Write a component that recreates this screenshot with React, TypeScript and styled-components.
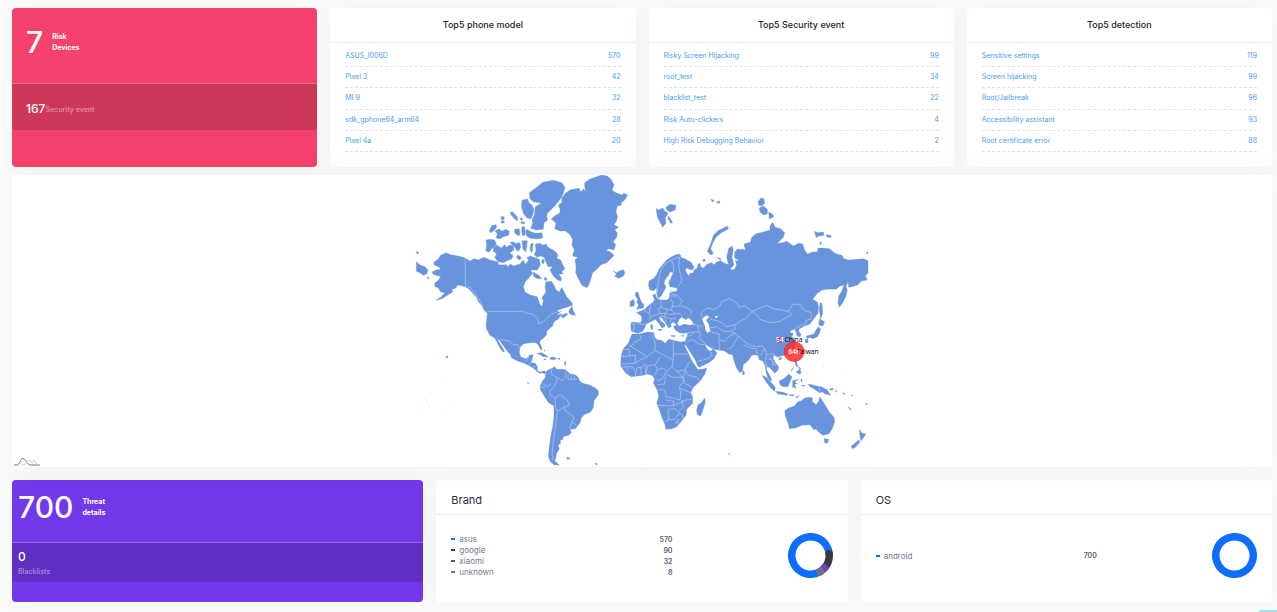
import React from "react";
import styled, { createGlobalStyle } from "styled-components";

const GlobalStyle = createGlobalStyle`
  * { box-sizing: border-box; }
  body {
    margin: 0;
    background: #fbfcfc;
    font-family: Inter, "Liberation Sans", sans-serif;
    color: #212529;
  }
  h2, ul, p { margin: 0; padding: 0; }
  ul { list-style: none; }
`;

const Page = styled.main`
  padding: 8px 5px 10px 12px;
  display: flex;
  flex-direction: column;
`;

const Row = styled.section<{ $columns: number }>`
  display: grid;
  grid-template-columns: repeat(${(p) => p.$columns}, minmax(0, 1fr));
  gap: 13px;
`;

const Card = styled.article<{ $height: number }>`
  display: flex;
  flex-direction: column;
  min-height: ${(p) => p.$height}px;
  border-radius: 4px;
  background: #fff;
  box-shadow: 0 0 28px rgba(70, 80, 120, 0.05);
`;

const StatCard = styled(Card)<{ $color: string }>`
  background: ${(p) => p.$color};
  color: #fff;
`;

const StatHead = styled.div<{ $height: number; $indent: number }>`
  display: flex;
  align-items: center;
  gap: 9px;
  height: ${(p) => p.$height}px;
  padding: 0 ${(p) => p.$indent}px 8px;
`;

const BigNumber = styled.strong`
  font-size: 30px;
  line-height: 36px;
  font-weight: 500;
`;

const StatLabel = styled.span`
  width: 40px;
  font-size: 7px;
  line-height: 11px;
  font-weight: 700;
`;

const StatStrip = styled.div<{ $height: number; $indent: number; $stacked?: boolean }>`
  display: flex;
  flex-direction: ${(p) => (p.$stacked ? "column" : "row")};
  align-items: ${(p) => (p.$stacked ? "flex-start" : "center")};
  justify-content: ${(p) => (p.$stacked ? "center" : "flex-start")};
  height: ${(p) => p.$height}px;
  padding: ${(p) => (p.$stacked ? 0 : 3)}px ${(p) => p.$indent}px 0;
  border-top: 1px solid rgba(255, 255, 255, 0.3);
  border-radius: 0 0 4px 4px;
  background: rgba(0, 0, 0, 0.16);
`;

const StripNumber = styled.strong`
  font-size: 12px;
  line-height: 16px;
  font-weight: 500;
`;

const StripLabel = styled.span`
  padding-top: 2px;
  font-size: 7px;
  line-height: 10px;
  font-weight: 600;
  color: rgba(255, 255, 255, 0.4);
`;

const TopTitle = styled.h2`
  height: 35px;
  border-bottom: 1px solid #eceff1;
  font-size: 9px;
  line-height: 33px;
  font-weight: 500;
  text-align: center;
`;

const TopList = styled.ul`
  flex: 1;
  display: grid;
  grid-template-rows: repeat(5, 1fr);
  padding: 3px 15px 15px;
`;

const TopItem = styled.li`
  display: flex;
  border-bottom: 1px dashed #dfe1ed;
`;

const TopLink = styled.a`
  flex: 1;
  display: flex;
  justify-content: space-between;
  align-items: center;
  font-size: 7px;
  line-height: 12px;
  color: #4c9cf0;
  text-decoration: none;
`;

const MapCard = styled.section`
  position: relative;
  margin: 8px 0 13px;
  background: #fff;
  box-shadow: 0 0 28px rgba(70, 80, 120, 0.05);
`;

const WorldMap = styled.svg`
  display: block;
  width: 100%;
  height: 292px;
`;

const MapCredit = styled.a`
  position: absolute;
  left: 2px;
  bottom: 1px;
  line-height: 0;
`;

const PanelTitle = styled.h2`
  height: 35px;
  padding: 4px 15px 0;
  border-bottom: 1px solid #ebedf2;
  font-size: 11px;
  line-height: 32px;
  font-weight: 400;
  color: #2b2b45;
`;

const PanelBody = styled.div`
  flex: 1;
  display: flex;
  align-items: center;
  justify-content: space-between;
  padding: 0 15px 6px;
`;

const Legend = styled.ul`
  width: 58%;
`;

const LegendItem = styled.li`
  display: flex;
  align-items: center;
  height: 11px;
  font-size: 8px;
  color: #74788d;
`;

const Dash = styled.i<{ $color: string }>`
  width: 4px;
  height: 2px;
  margin-right: 4px;
  background: ${(p) => p.$color};
`;

const LegendValue = styled.b`
  margin-left: auto;
  font-size: 7px;
  font-weight: 600;
  color: #595d75;
`;

const CornerButton = styled.button`
  position: fixed;
  right: 0;
  bottom: 0;
  width: 18px;
  height: 2px;
  padding: 0;
  border: 0;
  border-radius: 2px 0 0 0;
  background: #a9def5;
`;

type Entry = [string, number];

const topLists: { title: string; items: Entry[] }[] = [
  {
    title: "Top5 phone model",
    items: [["ASUS_I006D", 570], ["Pixel 3", 42], ["MI 9", 32], ["sdk_gphone64_arm64", 28], ["Pixel 4a", 20]],
  },
  {
    title: "Top5 Security event",
    items: [["Risky Screen Hijacking", 99], ["root_test", 34], ["blacklist_test", 22], ["Risk Auto-clickers", 4], ["High Risk Debugging Behavior", 2]],
  },
  {
    title: "Top5 detection",
    items: [["Sensitive settings", 119], ["Screen hijacking", 99], ["Root/Jailbreak", 96], ["Accessibility assistant", 93], ["Root certificate error", 88]],
  },
];

const palette = ["#0d6efd", "#343a40", "#6f42c1", "#6c757d"];

const shares: { title: string; items: Entry[] }[] = [
  { title: "Brand", items: [["asus", 570], ["google", 90], ["xiaomi", 32], ["unknown", 8]] },
  { title: "OS", items: [["android", 700]] },
];

const land = [
  // Greenland, Iceland
  "M524 38L540 27 560 20 575 15 592 18 603 28 612 44 606 60 618 68 637 75 641 70 653 75 646 88 633 100 634 106 622 108 618 125 623 140 618 155 612 165 626 171 614 180 622 188 620 202 610 215 617 224 612 240 596 236 589 242 600 245 612 255 607 262 590 278 573 284 562 296 548 308 543 325 536 345 531 353 517 347 507 330 497 308 498 288 495 270 503 262 488 258 490 248 493 240 486 225 488 208 478 192 466 183 450 183 434 176 438 160 424 147 434 138 450 128 450 116 445 106 456 97 455 85 466 70 480 60 497 56 507 55 513 66 521 56 528 66 524 50Z",
  "M610 303L620 308 632 301 641 300 645 310 638 320 625 325 614 318 620 313Z",
  // Canadian archipelago
  "M358 68L385 48 398 37 430 31 455 38 465 52 461 66 455 82 444 96 434 108 420 122 412 130 410 140 413 150 402 158 400 178 380 180 362 175 368 160 366 148 373 135 376 110 394 100 370 95 360 86Z",
  "M337 90L352 87 358 100 366 105 372 118 368 135 362 147 350 143 340 130 334 108Z",
  "M350 178L364 186 378 190 396 188 398 204 380 207 360 205 350 198 347 185Z",
  "M300 127l8-1 14 14 1 12-8-4-12-14ZM272 140l10 0 1 8-8 3ZM274 153l8 0 2 5-10 2ZM238 182L246 166 258 164 260 172 250 184 240 188Z",
  "M255 182L268 176 274 184 288 178 298 184 296 196 280 200 270 207 258 203 262 192ZM314 178l14-2 2 20-8 0-8-8ZM336 170l8 0 2 24-8 4-3-14ZM332 155l10 0 3 6-10 0ZM330 144l6 0 2 6-6 0Z",
  "M228 210L240 208 254 210 260 224 250 232 244 238 236 247 227 242 230 226Z",
  "M250 232L262 226 274 234 284 224 290 232 300 224 310 228 312 240 300 248 309 258 304 268 290 272 282 278 264 275 254 262 260 252 250 244Z",
  "M300 217l12-1 8 10-2 10ZM318 220l12-2 2 14-6 12-8-4ZM336 212l16 0-2 20-3 14-8-8ZM322 256l8 2 4 8-6 4-8-6ZM362 222l8-2-4 28-6-8ZM370 306l14 8 12 12-14 0-12-8ZM404 322l8 4-4 6-6-4ZM398 266l6 6-4 10-6-6Z",
  "M376 222L390 220 398 226 408 222 414 232 436 244 444 256 440 264 452 270 460 288 465 296 456 304 458 312 446 312 455 325 452 334 440 328 430 318 420 300 428 290 414 290 402 262 392 258 380 262 372 252 378 244Z",
  // North and Central America
  "M72 276L84 268 92 256 108 248 122 254 140 257 160 262 180 273 192 266 205 270 222 262 240 270 262 275 268 285 290 284 292 291 302 282 310 288 330 282 340 270 346 284 356 270 350 264 360 258 372 262 388 268 391 285 382 300 370 300 362 300 368 310 358 322 346 335 340 350 345 366 362 376 382 380 388 400 396 410 400 392 395 384 408 366 405 350 408 335 424 334 432 345 438 360 448 366 455 352 464 368 470 380 486 398 487 406 470 412 456 416 440 422 448 426 460 420 454 434 444 448 436 452 430 460 428 468 420 475 410 484 410 494 400 505 390 512 389 520 395 532 396 540 390 537 386 526 378 518 360 518 340 522 330 532 328 548 332 560 345 566 356 562 357 556 370 554 366 568 363 578 376 580 382 590 382 602 392 606 402 602 408 606 405 612 396 608 390 610 380 604 370 594 355 586 340 578 325 574 305 564 300 552 292 544 278 524 266 508 264 512 276 530 284 546 279 546 270 534 262 518 254 504 240 496 230 478 228 466 230 450 232 430 220 418 218 410 206 396 198 380 185 366 176 356 164 350 150 346 142 346 138 354 126 358 128 366 112 376 96 386 78 391 92 382 104 370 90 364 86 354 75 350 74 340 86 330 92 320 70 313 66 306 78 300 92 298 88 292 72 284Z",
  "M19 275L30 285 44 290 54 300 50 312 40 316 30 308 19 304ZM19 244l8 4-6 4ZM52 320l6 4-4 4ZM476 424L486 408 490 424 497 436 484 434 478 430ZM452 438L468 430 474 432 460 444Z",
  // Caribbean
  "M380 550L395 548 408 556 414 561 400 560 388 553ZM420 563l10-2 10 5-8 3-12-1ZM444 565l6 0 0 3-6 0ZM402 566l7 2-6 2ZM402 540l3 1-1 3ZM464 574l3 0 0 12-3 0Z",
  // South America
  "M408 606L414 600 428 594 434 590 440 598 456 598 468 600 480 612 496 614 504 622 510 634 518 640 536 644 558 655 566 664 564 676 552 692 550 712 542 726 522 734 514 744 510 758 496 776 480 778 484 788 476 796 460 800 458 808 450 812 452 820 444 826 448 836 440 850 438 862 434 872 448 886 432 884 420 874 415 858 418 830 422 800 428 770 432 740 432 708 416 698 404 680 392 660 390 648 398 632 405 624Z",
  "M470 862l10 2-3 4-6-1ZM556 880l6 1-1 4-4-2Z",
  // Eurasia
  "M715 345L718 332 732 325 740 314 748 296 758 284 770 270 782 262 794 256 805 252 812 256 812 262 824 266 842 276 852 290 848 300 838 298 830 294 826 298 828 306 836 318 840 310 850 308 852 300 862 294 864 282 870 280 872 290 880 294 892 282 905 278 912 284 920 276 932 272 944 280 956 284 960 296 956 284 950 262 956 235 966 228 970 240 966 262 972 284 962 296 964 300 974 298 980 284 976 272 988 272 974 264 974 246 982 238 996 238 1006 240 1002 222 1022 216 1024 204 1036 192 1060 186 1080 180 1080 168 1088 157 1096 172 1112 176 1124 188 1120 202 1102 220 1118 218 1130 214 1142 222 1150 228 1166 220 1178 222 1184 240 1192 252 1208 246 1222 246 1224 234 1240 234 1258 236 1270 246 1280 252 1296 256 1302 266 1318 270 1340 268 1360 266 1374 272 1374 308 1366 318 1372 330 1356 332 1342 345 1326 350 1316 352 1314 336 1308 348 1312 360 1308 378 1298 398 1288 412 1284 398 1286 378 1296 362 1302 345 1290 348 1280 357 1250 358 1236 360 1222 370 1208 388 1222 396 1226 410 1224 430 1210 448 1200 462 1184 468 1168 476 1166 482 1173 494 1170 500 1161 498 1158 486 1153 477 1142 482 1140 488 1150 490 1146 500 1154 512 1158 520 1148 538 1136 550 1122 556 1112 558 1104 562 1094 556 1088 562 1096 578 1106 590 1104 600 1094 610 1086 600 1078 592 1070 590 1070 600 1078 614 1086 630 1080 632 1072 620 1068 606 1066 588 1058 572 1048 570 1044 556 1036 554 1026 556 1014 572 1000 584 998 600 992 608 988 607 978 590 970 566 968 554 956 552 942 542 922 540 905 535 888 524 882 518 892 538 902 544 910 536 921 548 912 566 896 578 868 592 862 586 856 570 840 545 828 526 826 514 832 496 834 488 820 490 808 488 796 480 790 470 800 464 790 456 782 462 784 470 776 474 766 458 756 444 746 440 752 452 766 464 764 470 756 474 748 462 736 448 728 452 716 458 708 462 704 474 698 484 684 490 664 484 662 468 664 456 690 458 696 452 694 438 680 428 700 420 706 416 718 404 728 398 734 390 728 375 736 372 740 384 752 390 770 390 778 384 780 368 800 364 802 354 780 350 776 338 784 322 790 308 780 305 776 316 766 328 762 340 768 352 760 366 752 380 744 384 740 370 740 352 732 362 720 360Z",
  // British Isles and Arctic islands
  "M676 368L684 366 688 380 694 396 702 404 700 414 680 418 686 406 680 396 684 388 676 378ZM660 396L670 388 674 398 672 408 660 410Z",
  "M738 116L746 120 758 114 764 122 774 130 766 144 768 160 758 172 750 156 742 140ZM768 112L780 103 798 106 796 120 780 126 770 120ZM774 138l6 6 8 14-6 2-8-14Z",
  "M902 88l10 3-4 6ZM920 95l9-2 1 6-8 1ZM1044 96L1052 84 1062 86 1064 100 1054 108 1046 106ZM1048 114L1060 108 1072 118 1072 132 1060 134 1050 126ZM1076 126L1090 134 1090 142 1078 147Z",
  "M892 244L902 222 910 196 924 182 952 169 956 176 934 188 918 202 908 220 902 236 910 250 902 255ZM920 262l14 4-4 4ZM878 269l6-2 2 6-6 2Z",
  "M1214 184L1224 188 1240 186 1242 196 1228 198 1218 202ZM1248 194l14 2 2 6-12 0ZM1228 216l8 2-4 6ZM1370 246l4 0 0 6-4-2Z",
  // East Asia
  "M1230 398L1236 400 1238 430 1232 448 1228 420ZM1226 460L1230 446 1244 456 1238 468 1228 466ZM1188 498L1198 496 1212 492 1218 480 1226 470 1232 478 1228 490 1222 500 1208 506 1200 502 1192 506ZM1186 508l8 0 0 10-8 0ZM1106 566l8-5 0 7-6 3ZM998 600l5 6 0 8-5 0Z",
  "M1152 568L1160 566 1160 580 1166 592 1158 588ZM1158 606l12-8 4 12-8 2ZM1166 592l6 2-2 6ZM1144 600l8-10-8 14Z",
  "M1056 616L1070 622 1084 638 1096 652 1094 664 1084 656 1070 638ZM1096 664L1116 666 1134 672 1130 676 1104 672ZM1108 632L1122 626 1136 612 1146 620 1140 636 1134 650 1120 650 1110 644ZM1148 632L1166 628 1154 635 1162 642 1154 642 1158 656 1152 650 1148 654ZM1194 642L1206 644 1218 648 1234 650 1252 660 1262 676 1246 672 1238 666 1228 668 1212 656 1200 650Z",
  "M1138 674l14 0 0 3-14 0ZM1156 682l12-6-8 8ZM1172 630l4-4 0 12ZM1174 646l10 0-2 4ZM1258 658l10-4 2 5-10 2ZM1276 660l6 5-3 2Z",
  // Africa and Madagascar
  "M666 492L690 492 712 486 732 488 734 500 738 508 756 512 766 520 776 508 796 512 812 516 826 514 828 526 822 524 836 552 846 574 858 590 862 598 876 598 890 594 886 610 870 634 850 652 842 668 848 680 848 700 830 718 828 736 814 754 800 770 786 776 768 778 764 762 754 738 748 718 740 700 746 680 742 660 730 640 734 626 726 616 712 612 700 616 682 618 664 620 648 610 634 592 632 576 634 556 640 536 656 518 660 506Z",
  "M884 684L886 696 880 716 872 738 862 734 860 720 864 704 874 698Z",
  // Mediterranean islands
  "M722 464l6 0 0 14-5 0ZM742 478l14 0-4 6ZM784 496l12 1-1 3-11-1ZM814 497l8-2-3 5Z",
  // Australia and New Zealand
  "M1124 722L1136 714 1154 708 1162 696 1174 692 1184 684 1198 682 1208 684 1206 694 1218 704 1226 694 1230 680 1238 694 1246 706 1258 726 1272 742 1274 756 1266 778 1256 792 1238 796 1224 784 1218 776 1212 780 1200 764 1176 766 1156 774 1138 776 1134 758 1126 738Z",
  "M1242 806L1256 808 1252 820 1244 818ZM1348 778L1356 790 1368 792 1360 804 1352 812 1350 798ZM1346 810L1350 816 1336 832 1326 836 1324 828Z",
  // Pacific islands
  "M108 558l5 0 0 5-5 0ZM351 636l5 3-1 3ZM1314 710l10 8-3 2ZM1368 700l5 1-4 5ZM1324 674l4 4-3 0ZM1296 668l10 4-2 2ZM956 850l3 0 0 3-3 0Z",
];

const islets = [[24, 691], [46, 688], [52, 691], [58, 709], [38, 718], [94, 718], [133, 703], [103, 631], [453, 508], [607, 580], [634, 526], [676, 697], [905, 655], [905, 717], [913, 714], [1240, 588], [1292, 610], [1330, 750], [1358, 738], [973, 874], [710, 883], [670, 336], [1204, 606]];

const seas = [
  "M802 462L808 448 816 442 828 450 834 443 840 446 852 462 840 466 824 462 808 468Z",
  "M876 446L890 436 898 442 888 450 896 462 898 472 902 484 892 488 886 480 884 466Z",
  "M462 414L478 414 474 426 462 428 440 436 452 426Z",
  "M916 438l6-1 0 6-6 0Z",
];

const borders = [
  // Americas
  "M166 262V350L180 352 196 372 212 396 218 410M232 424H338L350 430 368 432 384 446 386 462 404 452 424 432 446 424M262 510L284 510 300 514 310 524 322 524 330 536M346 576L356 562M356 586L364 576M370 592L382 586M382 604L384 596",
  "M426 596L424 612 440 622 440 636 430 652 420 662 420 676 436 684 450 674 472 690 478 706 462 712 442 724M396 640L412 650 424 640M440 622L456 632 466 622 468 602M474 612L474 628 500 628M484 616V626M494 616V628M436 684V710L442 724 438 760 432 800 426 850 430 872M462 712L468 724 488 738 492 744 484 760 478 776M484 756L500 766M390 650L404 652",
  // Europe
  "M742 370L744 340 752 300 766 280 784 270 800 262 810 262M784 270L792 290 790 306M808 262L806 290 816 332 804 350M680 458L704 464M664 462H674L670 484M700 420L716 430 722 440 718 452M724 398L720 412 718 430M752 390L754 412 742 416 752 430 738 434 722 440M754 412L772 418 784 420 790 396 780 386M786 372L802 376 816 392 808 408 784 410M784 420L796 432 808 430 818 444M772 418L766 430 780 434 796 432M752 430L766 430 764 440 782 446 798 446M748 440L764 440 768 456M782 446L782 458M812 408L828 412 846 424 842 436M780 362L796 366M776 378H800",
  // Middle East and Central Asia
  "M848 462L864 466 878 470M834 488L852 486 868 486 872 496 866 504 886 520M864 466L868 486M832 500L846 494 852 486M830 516L848 508 866 522 884 524M862 574L880 570 902 562 904 546M876 446L874 430 890 414 914 418 930 408 936 394 960 386 980 398 988 412 1006 408 1026 424 1010 444 990 454 972 466 948 470 936 458 914 450 900 448M898 474L920 470 940 484 962 484 978 474 972 466M902 486L928 492 926 510 930 528 926 540M926 510L944 514 958 498 976 490 962 484M976 490L986 498 976 514 968 530 956 536M986 498L1000 512 1020 526 1040 530 1058 528 1066 540M1000 524L1022 534 1036 536M1038 536L1042 552M1052 556L1060 540 1066 540",
  "M1026 424L1050 414 1070 406 1090 416 1116 420 1134 424 1146 434 1130 442 1110 454 1080 458 1050 448 1040 434 1026 424M1134 424L1150 402 1172 404 1180 420 1204 428 1202 448 1190 450 1184 464M1154 478L1172 466 1186 464M1066 540L1070 554 1084 550 1096 556M1070 554L1066 572 1072 590M1072 566L1086 570 1090 590M1078 560L1090 576 1098 588M1228 650V668",
  // Africa
  "M732 488L728 500 736 520 734 540 750 550 790 570M660 532L672 518 694 506 690 494M640 538H658V560M658 526L712 560 736 540M790 512V552M790 552H834M790 552V566L786 590M632 560L676 556V580L636 582M676 580L690 570 712 560M634 592L650 590 652 604M652 590L668 590 674 602M676 618L680 594 700 590 706 580M694 616L692 592M706 614L708 588 736 584M708 614L712 590M736 584L742 600 732 618M736 584L750 560M742 600L758 594 770 604 786 590 800 604 824 600 838 574M740 632L756 628 770 604M770 614L790 622 820 622 800 604M824 600L836 616 860 622 870 634M826 602L820 622 824 640 846 652M742 644L764 642 766 620M744 660H764L768 680 790 684 810 690 812 668 808 650 820 636 820 622M742 706L790 708 792 694 768 690M790 708L806 700 828 690 846 688M764 756L776 750 774 718M776 748L794 748 808 730 796 716 776 718M808 730L816 732 820 748M816 690L820 712 808 722M842 668L812 656M800 752L806 748 806 758 798 760Z",
];

const Marker = styled.circle`
  fill: #ff2a2a;
  fill-opacity: 0.85;
`;

const MapText = styled.text<{ $light?: boolean }>`
  font-family: "Open Sans", "Liberation Sans", sans-serif;
  font-size: 20px;
  font-weight: ${(p) => (p.$light ? 600 : 400)};
  fill: ${(p) => (p.$light ? "#fff" : "#000")};
`;

function World() {
  return (
    <WorldMap viewBox="-4 15 1400 876" role="img" aria-label="World map of threats">
      <g fill="#6794dc" stroke="#6794dc" strokeWidth="1">
        {land.map((d) => <path key={d} d={d} />)}
        {islets.map(([x, y]) => <circle key={`${x}-${y}`} cx={x} cy={y} r="1.2" stroke="none" opacity="0.7" />)}
      </g>
      <g fill="#fff">
        {seas.map((d) => <path key={d} d={d} />)}
      </g>
      <g fill="none" stroke="#a9c3ec" strokeWidth="2.4" strokeLinejoin="round">
        {borders.map((d) => <path key={d} d={d} />)}
      </g>
      <Marker cx="1109" cy="509" r="8" />
      <Marker cx="1152" cy="545" r="31" />
      <MapText $light x="1098" y="516">54</MapText>
      <MapText x="1124" y="516">China</MapText>
      <MapText $light x="1135" y="552">648</MapText>
      <MapText x="1160" y="552">Taiwan</MapText>
    </WorldMap>
  );
}

// The ring starts at the lower right and runs clockwise; later arcs cover earlier ends.
function Donut({ items }: { items: Entry[] }) {
  const total = items.reduce((sum, [, n]) => sum + n, 0);
  const length = 2 * Math.PI * 18.75;
  let offset = 0;
  return (
    <svg width="45" height="45" viewBox="0 0 45 45" role="img" aria-label="Share chart">
      <g transform="rotate(60 22.5 22.5)" fill="none" strokeWidth="7.5" strokeLinecap="round">
        {items.map(([name, value], i) => {
          const arc = (value / total) * length;
          const start = offset;
          offset += arc;
          return (
            <circle key={name} cx="22.5" cy="22.5" r="18.75" stroke={palette[i]}
              strokeDasharray={`${arc} ${length - arc}`} strokeDashoffset={-start} />
          );
        })}
      </g>
    </svg>
  );
}

export default function App() {
  return (
    <>
      <GlobalStyle />
      <Page>
        <Row $columns={4}>
          <StatCard $height={159} $color="#f5426c">
            <StatHead $height={75} $indent={14}>
              <BigNumber>7</BigNumber>
              <StatLabel>Risk Devices</StatLabel>
            </StatHead>
            <StatStrip $height={47} $indent={14}>
              <StripNumber>167</StripNumber>
              <StripLabel>Security event</StripLabel>
            </StatStrip>
          </StatCard>
          {topLists.map(({ title, items }) => (
            <Card key={title} $height={159}>
              <TopTitle>{title}</TopTitle>
              <TopList>
                {items.map(([name, count]) => (
                  <TopItem key={name}>
                    <TopLink href="#"><span>{name}</span><span>{count}</span></TopLink>
                  </TopItem>
                ))}
              </TopList>
            </Card>
          ))}
        </Row>

        <MapCard>
          <World />
          <MapCredit href="#" aria-label="Chart credits">
            <svg width="27" height="9" viewBox="0 0 27 9" fill="none">
              <path d="M0 8H3C6 8 6 1.500 9 1.500S12 8 17 8H26" stroke="#777" />
              <path d="M8 8C13 8 13 3 15 3S17 6 18 6 19 3 20 3 21 8 26 8" stroke="#ccc" />
            </svg>
          </MapCredit>
        </MapCard>

        <Row $columns={3}>
          <StatCard $height={122} $color="#7239ea">
            <StatHead $height={62} $indent={6}>
              <BigNumber>700</BigNumber>
              <StatLabel>Threat details</StatLabel>
            </StatHead>
            <StatStrip $height={40} $indent={6} $stacked>
              <StripNumber>0</StripNumber>
              <StripLabel>Blacklists</StripLabel>
            </StatStrip>
          </StatCard>
          {shares.map(({ title, items }) => (
            <Card key={title} $height={122}>
              <PanelTitle>{title}</PanelTitle>
              <PanelBody>
                <Legend>
                  {items.map(([name, value], i) => (
                    <LegendItem key={name}>
                      <Dash $color={palette[i]} />
                      {name}
                      <LegendValue>{value}</LegendValue>
                    </LegendItem>
                  ))}
                </Legend>
                <Donut items={items} />
              </PanelBody>
            </Card>
          ))}
        </Row>
      </Page>
      <CornerButton aria-label="Open help" />
    </>
  );
}
